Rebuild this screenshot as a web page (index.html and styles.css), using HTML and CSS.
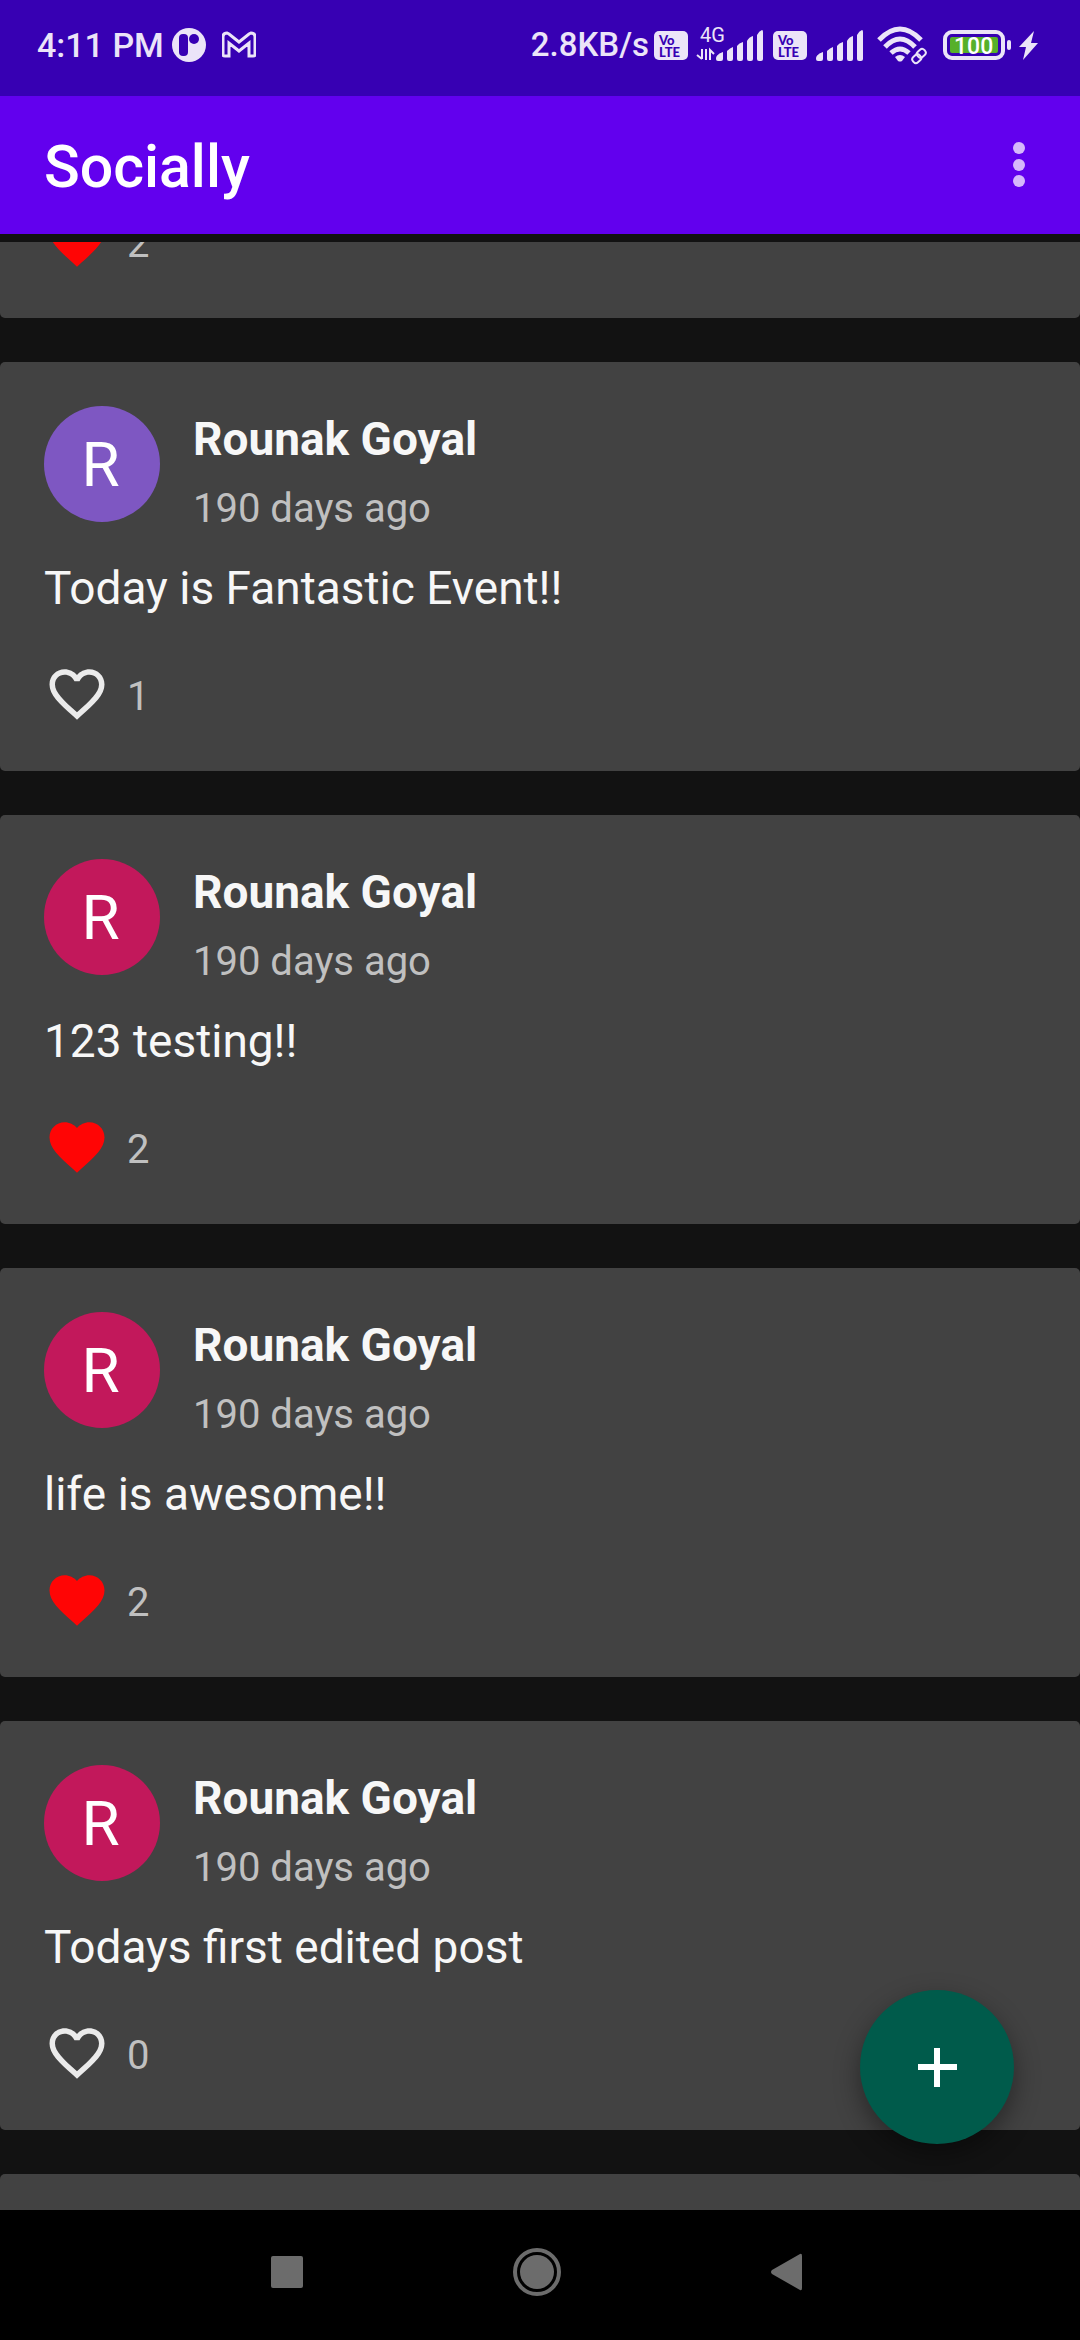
FILE: index.html
```html
<!DOCTYPE html>
<html lang="en">
<head>
<meta charset="utf-8">
<meta name="viewport" content="width=device-width, initial-scale=1">
<title>Socially</title>
<link rel="stylesheet" href="styles.css">
</head>
<body>
<svg class="sprite" aria-hidden="true">
  <symbol id="heart" viewBox="0 0 24 24"><path d="M12 21.35l-1.45-1.32C5.4 15.36 2 12.28 2 8.5 2 5.42 4.42 3 7.5 3c1.74 0 3.41.81 4.5 2.09C13.09 3.81 14.76 3 16.5 3 19.58 3 22 5.42 22 8.5c0 3.78-3.4 6.86-8.55 11.54L12 21.35z"/></symbol>
  <symbol id="heart-outline" viewBox="0 0 24 24"><path d="M16.5 3c-1.74 0-3.41.81-4.5 2.09C10.91 3.81 9.24 3 7.5 3 4.42 3 2 5.42 2 8.5c0 3.78 3.4 6.86 8.55 11.54L12 21.35l1.45-1.32C18.6 15.36 22 12.28 22 8.5 22 5.42 19.58 3 16.5 3zm-4.4 15.55l-.1.1-.1-.1C7.14 14.24 4 11.39 4 8.5 4 6.5 5.5 5 7.5 5c1.54 0 3.04.99 3.57 2.36h1.87C13.46 5.99 14.96 5 16.5 5c2 0 3.5 1.5 3.5 3.5 0 2.89-3.14 5.74-7.9 10.05z"/></symbol>
  <symbol id="bars" viewBox="0 0 48 40">
    <path d="M0 34c0-4 4-6 7-7v7q0 2-2 2H2q-2 0-2-2zM11 26q3-3 6-4v12q0 2-2 2h-2q-2 0-2-2zM21 21q2-3 6-4v17q0 2-2 2h-2q-2 0-2-2zM31 16q2-4 6-5v23q0 2-2 2h-2q-2 0-2-2zM41 10q2-4 5-5 1 0 1 2v27q0 2-2 2h-2q-2 0-2-2z"/>
  </symbol>
</svg>

<div class="status">
  <span class="status-text">4:11 PM</span>
  <svg class="app-dot" viewBox="0 0 34 40"><circle cx="17" cy="20" r="17"/><rect class="cut" x="7" y="9" width="9" height="22" rx="4"/><circle class="cut" cx="22" cy="14" r="5"/></svg>
  <svg class="mail" viewBox="0 0 34 40"><path class="line" d="M5 8q-4 0-4 4v18q0 1 2 1h4V18l10 8 10-8v13h4q2 0 2-1V12q0-4-4-4l-2 1-10 8L7 9z"/></svg>
  <span class="status-text speed">2.8KB/s</span>
  <span class="volte"><span>Vo</span><span>LTE</span></span>
  <svg class="network" viewBox="0 0 68 40"><text class="network-text" x="4" y="17">4G</text><path class="line" d="M6 24v10M1 30l5 4M10 24v11M14 35V25l4 4"/><use href="#bars" x="20" width="48" height="40"/></svg>
  <span class="volte second"><span>Vo</span><span>LTE</span></span>
  <svg class="bars"><use href="#bars"/></svg>
  <svg class="wifi" viewBox="0 0 51 40"><path class="arc" d="M2 15Q23-7 44 15M8 22Q23 6 38 22M14 28q9-8 18 0"/><path d="M18 32q5-4 10 0l-3 4q-2 1-4 0z"/><g class="link"><rect x="-8" y="-3" width="9" height="7" rx="3" transform="translate(42 31) rotate(-42)"/><rect x="-1" y="-4" width="9" height="7" rx="3" transform="translate(42 31) rotate(-42)"/></g></svg>
  <svg class="battery" viewBox="0 0 68 40"><rect class="shell" x="2" y="7" width="58" height="26" rx="7"/><rect class="charge" x="7" y="12" width="48" height="16" rx="2"/><rect x="64" y="15" width="4" height="10" rx="2"/><text class="battery-text" x="11" y="29">100</text></svg>
  <svg class="bolt" viewBox="0 0 19 40"><path d="M15 6L0 22h7L4 35 19 18h-7z"/></svg>
</div>

<header class="appbar">
  <h1>Socially</h1>
  <button class="menu" aria-label="More options"><svg viewBox="0 0 66 66"><circle cx="33" cy="16" r="6"/><circle cx="33" cy="33" r="6"/><circle cx="33" cy="49" r="6"/></svg></button>
</header>

<main class="feed">
  <div class="list">
    <article class="card">
      <div class="likes"><button class="like liked" aria-label="Unlike"><svg><use href="#heart"/></svg></button><span>2</span></div>
    </article>
    <article class="card">
      <div class="author"><span class="avatar violet">R</span><div><h2>Rounak Goyal</h2><p class="when">190 days ago</p></div></div>
      <p class="post">Today is Fantastic Event!!</p>
      <div class="likes"><button class="like" aria-label="Like"><svg><use href="#heart-outline"/></svg></button><span>1</span></div>
    </article>
    <article class="card">
      <div class="author"><span class="avatar pink">R</span><div><h2>Rounak Goyal</h2><p class="when">190 days ago</p></div></div>
      <p class="post">123 testing!!</p>
      <div class="likes"><button class="like liked" aria-label="Unlike"><svg><use href="#heart"/></svg></button><span>2</span></div>
    </article>
    <article class="card">
      <div class="author"><span class="avatar pink">R</span><div><h2>Rounak Goyal</h2><p class="when">190 days ago</p></div></div>
      <p class="post">life is awesome!!</p>
      <div class="likes"><button class="like liked" aria-label="Unlike"><svg><use href="#heart"/></svg></button><span>2</span></div>
    </article>
    <article class="card">
      <div class="author"><span class="avatar pink">R</span><div><h2>Rounak Goyal</h2><p class="when">190 days ago</p></div></div>
      <p class="post">Todays first edited post</p>
      <div class="likes"><button class="like" aria-label="Like"><svg><use href="#heart-outline"/></svg></button><span>0</span></div>
    </article>
    <article class="card"></article>
  </div>
  <button class="fab" aria-label="New post"><svg viewBox="0 0 66 66"><path d="M33 14v39M14 33h39"/></svg></button>
</main>

<nav class="navbar">
  <button aria-label="Recent apps"><svg viewBox="0 0 50 50"><rect x="9" y="9" width="32" height="32" rx="2"/></svg></button>
  <button aria-label="Home"><svg viewBox="0 0 50 50"><circle class="ring" cx="25" cy="25" r="22"/><circle cx="25" cy="25" r="17"/></svg></button>
  <button aria-label="Back"><svg viewBox="0 0 50 50"><path d="M10 23L38 7q2-1 2 2v32q0 3-2 2L10 27q-2-2 0-4z"/></svg></button>
</nav>
</body>
</html>
```

FILE: styles.css
```css
* { box-sizing: border-box; margin: 0; padding: 0; }

body {
  display: flex;
  flex-direction: column;
  height: 100vh;
  overflow: hidden;
  background: #121212;
  color: #f7f7f7;
  font-family: Roboto, "Noto Sans", sans-serif;
}

button { border: 0; background: none; color: inherit; font: inherit; }
svg { display: block; flex: none; fill: currentColor; }
.sprite { position: absolute; width: 0; height: 0; }

.status {
  display: flex;
  align-items: center;
  flex: none;
  height: 96px;
  padding: 0 42px 6px 37px;
  background: #3700b3;
  color: #ebe4f8;
}
.status svg { height: 40px; }
.status-text { font-size: 34px; font-weight: 500; line-height: 40px; white-space: nowrap; }
.speed { margin-left: auto; font-size: 33px; }
.app-dot { width: 34px; margin-left: 8px; }
.cut { fill: #3700b3; }
.mail { width: 34px; margin-left: 16px; }
.line { fill: none; stroke: currentColor; stroke-width: 2; }
.mail .line { stroke-width: 3; }
.volte {
  display: flex;
  flex: none;
  flex-direction: column;
  width: 34px;
  height: 29px;
  margin-left: 5px;
  padding: 3px 0 0 5px;
  border-radius: 5px;
  background: #ebe4f8;
  color: #3700b3;
  font-family: Lato, sans-serif;
  font-size: 13px;
  font-weight: 900;
  line-height: 12px;
}
.network { width: 68px; margin-left: 8px; }
.network-text { font-size: 20px; }
.second { margin-left: 9px; }
.bars { width: 48px; margin-left: 9px; }
.wifi { width: 51px; margin-left: 13px; }
.arc { fill: none; stroke: currentColor; stroke-width: 5; }
.link { fill: none; stroke: currentColor; stroke-width: 2; }
.battery { width: 68px; margin-left: 15px; }
.shell { fill: none; stroke: currentColor; stroke-width: 4; }
.charge { fill: #56b02a; }
.battery-text { fill: #fff; font-size: 23px; font-weight: 500; }
.bolt { width: 19px; margin-left: 8px; }

.appbar {
  display: flex;
  align-items: center;
  justify-content: space-between;
  flex: none;
  height: 138px;
  padding: 0 28px 0 44px;
  background: #6200ee;
  color: #fff;
}
.appbar h1 { padding-top: 4px; font-size: 59px; font-weight: 500; line-height: 72px; }
.menu svg { width: 66px; height: 66px; color: #d6b8fb; }

.feed {
  position: relative;
  flex: 1;
  min-height: 0;
  margin-top: 8px;
  overflow: hidden;
}
/* The list is scrolled most of the way past its first post. */
.list { display: flex; flex-direction: column; gap: 44px; margin-top: -333px; }
.card {
  display: flex;
  flex: none;
  flex-direction: column;
  justify-content: flex-end;
  min-height: 409px;
  padding: 44px;
  border-radius: 5px;
  background: #424242;
}
.author { display: flex; gap: 33px; height: 136px; }
.avatar {
  display: flex;
  align-items: center;
  justify-content: center;
  width: 116px;
  height: 116px;
  padding-right: 3px;
  border-radius: 50%;
  color: #fff;
  font-size: 62px;
}
.violet { background: #7e57c2; }
.pink { background: #c2185b; }
.card h2 { font-size: 46px; font-weight: 700; line-height: 66px; }
.when { font-size: 40px; line-height: 74px; color: #c0c0c0; }
.post { margin-top: 16px; font-size: 46px; line-height: 60px; }
.likes { display: flex; align-items: center; gap: 17px; margin-top: 43px; height: 66px; font-size: 40px; color: #c0c0c0; }
.likes span { padding-top: 4px; }
.like { color: #ebebeb; }
.like svg { width: 66px; height: 66px; }
.liked { color: #ff0505; }

.fab {
  position: absolute;
  right: 66px;
  bottom: 66px;
  display: grid;
  place-items: center;
  width: 154px;
  height: 154px;
  border-radius: 50%;
  background: #005b4b;
  color: #fff;
  box-shadow: 0 10px 26px rgba(0, 0, 0, 0.4);
}
.fab svg { width: 66px; height: 66px; stroke: currentColor; stroke-width: 6; }

.navbar {
  display: flex;
  align-items: center;
  justify-content: center;
  gap: 200px;
  flex: none;
  height: 130px;
  padding: 0 6px 6px 0;
  background: #000;
  color: #6c6c6c;
}
.navbar svg { width: 50px; height: 50px; }
.ring { fill: none; stroke: currentColor; stroke-width: 4; }
```
